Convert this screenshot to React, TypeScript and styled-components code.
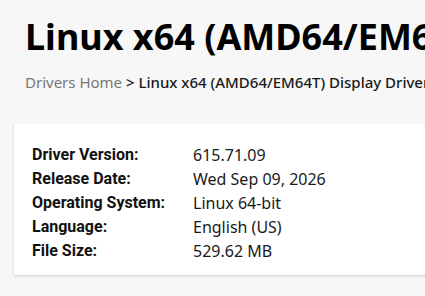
import React from "react";
import styled, { createGlobalStyle } from "styled-components";

const Global = createGlobalStyle`
  html, body { margin: 0; padding: 0; background: #f7f7f7; }
  body { font-family: "Noto Sans", "DejaVu Sans", sans-serif; color: #000; overflow: hidden; }
`;

const Page = styled.div`
  width: 425px;
  height: 296px;
  overflow: hidden;
  background: #f7f7f7;
`;

const Header = styled.div`
  padding: 14px 0 0 25px;
`;

const Title = styled.h1`
  margin: 0;
  font-size: 36px;
  line-height: 46px;
  font-weight: 700;
  white-space: nowrap;
  letter-spacing: 0;
`;

const Breadcrumb = styled.div`
  margin-top: 12px;
  font-size: 15px;
  line-height: 20px;
  white-space: nowrap;
`;

const Crumb = styled.span<{ $current?: boolean }>`
  color: ${(p) => (p.$current ? "#1a1a1a" : "#767676")};
  font-weight: ${(p) => (p.$current ? 500 : 400)};
`;

const Card = styled.div`
  margin: 32px 0 0 14px;
  width: 430px;
  height: 151px;
  box-sizing: border-box;
  background: #fff;
  border-radius: 2px;
  box-shadow: 0 1px 3px rgba(0, 0, 0, 0.18);
  padding: 19px 0 0 18px;
`;

const Grid = styled.div`
  display: grid;
  grid-template-columns: 161px auto;
  row-gap: 0;
`;

const Label = styled.div`
  font-family: Roboto, "Noto Sans", sans-serif;
  font-size: 16px;
  line-height: 24px;
  font-weight: 700;
  color: #111;
  white-space: nowrap;
`;

const Value = styled.div`
  font-size: 16px;
  line-height: 24px;
  font-weight: 400;
  color: #1a1a1a;
  white-space: nowrap;
`;

const rows: [string, string][] = [
  ["Driver Version:", "615.71.09"],
  ["Release Date:", "Wed Sep 09, 2026"],
  ["Operating System:", "Linux 64-bit"],
  ["Language:", "English (US)"],
  ["File Size:", "529.62 MB"],
];

export default function App() {
  return (
    <Page>
      <Global />
      <Header>
        <Title>Linux x64 (AMD64/EM64T) Display Driver</Title>
        <Breadcrumb>
          <Crumb>Drivers Home</Crumb>{" "}
          <Crumb $current>&gt; Linux x64 (AMD64/EM64T) Display Driver</Crumb>
        </Breadcrumb>
      </Header>
      <Card>
        <Grid>
          {rows.map(([k, v]) => (
            <React.Fragment key={k}>
              <Label>{k}</Label>
              <Value>{v}</Value>
            </React.Fragment>
          ))}
        </Grid>
      </Card>
    </Page>
  );
}
